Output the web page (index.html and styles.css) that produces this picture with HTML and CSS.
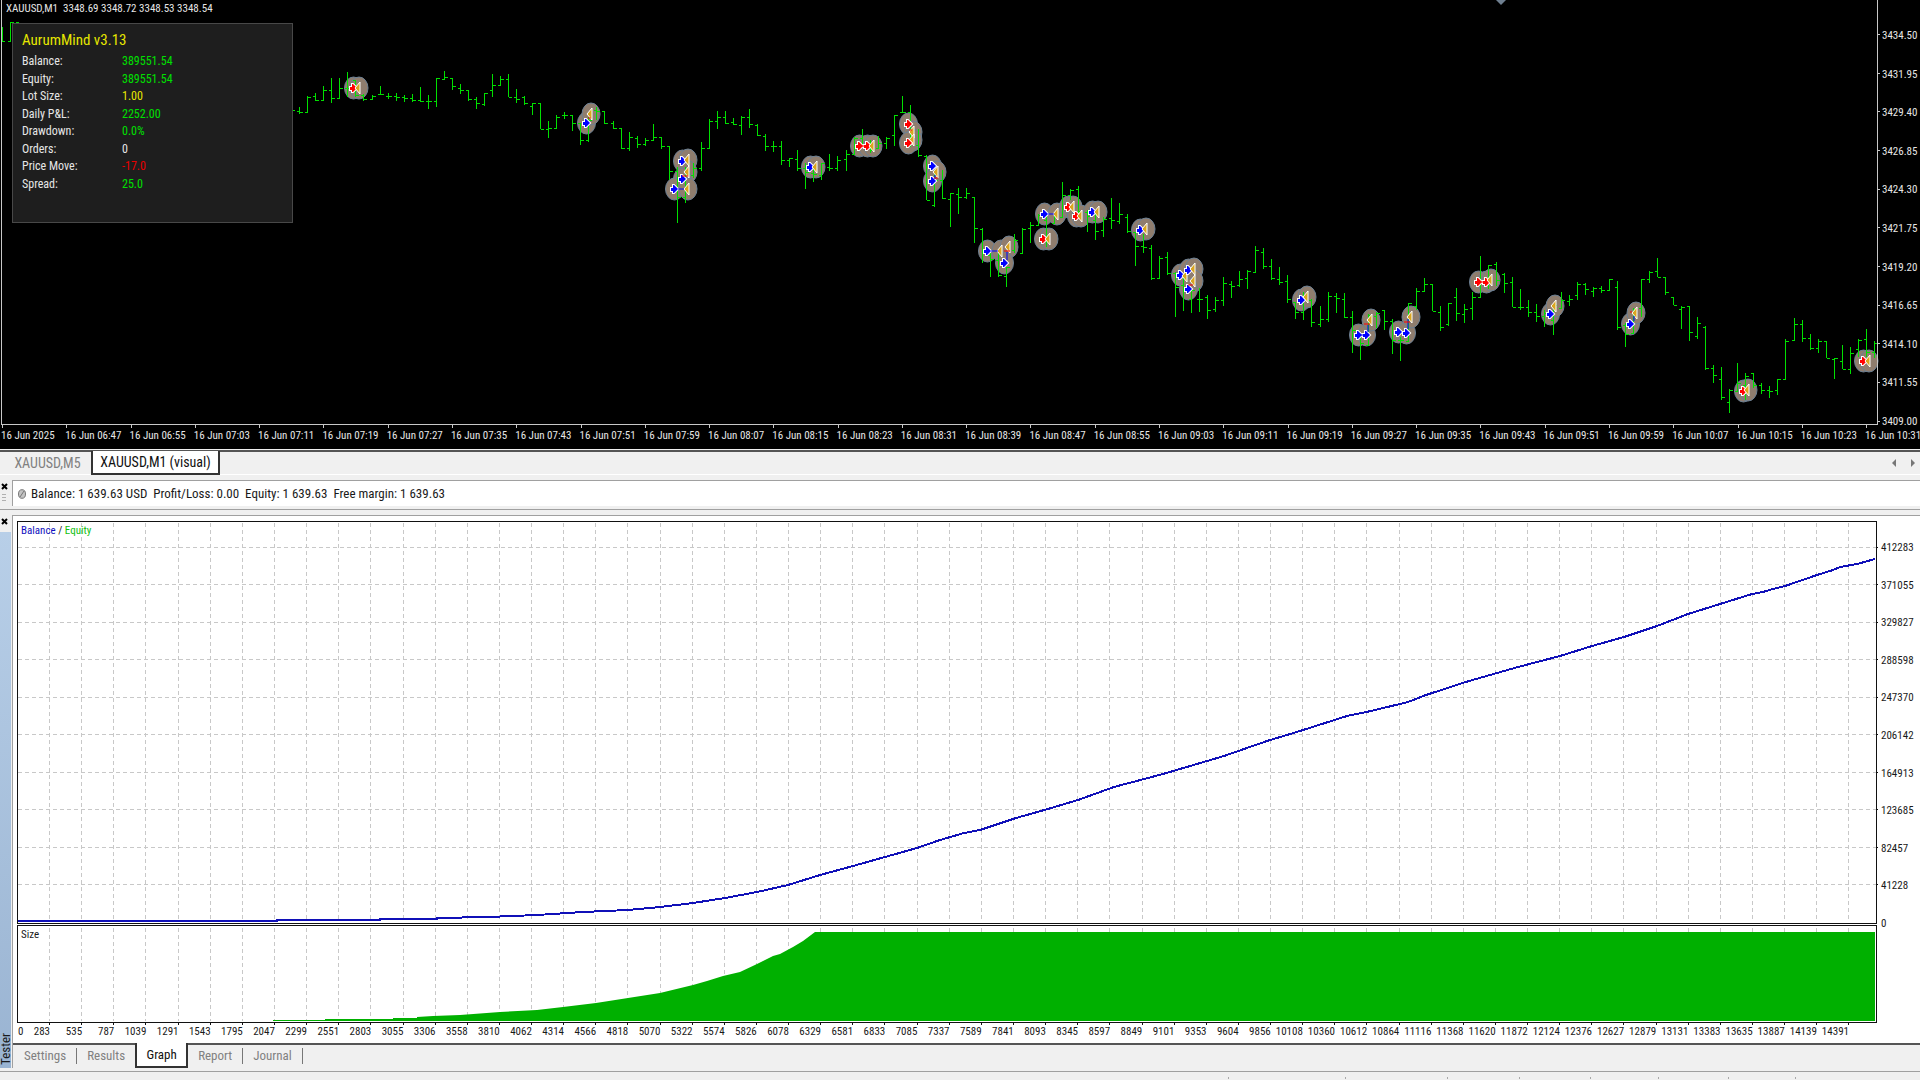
FILE: index.html
```html
<!DOCTYPE html>
<html lang="en">
<head>
<meta charset="utf-8">
<title>XAUUSD,M1 (visual)</title>
<link rel="stylesheet" href="styles.css">
</head>
<body>
<section class="price-chart">
  <div class="price-row">
    <svg id="price-plot" class="plot" viewBox="0 0 1880 428" role="img" aria-label="XAUUSD M1 price chart"></svg>
    <ol class="price-axis">
      <li>3434.50</li><li>3431.95</li><li>3429.40</li><li>3426.85</li><li>3424.30</li><li>3421.75</li><li>3419.20</li><li>3416.65</li><li>3414.10</li><li>3411.55</li><li>3409.00</li>
    </ol>
  </div>
  <ol id="time-axis" class="time-axis"></ol>
  <p class="quote">XAUUSD,M1&nbsp; 3348.69 3348.72 3348.53 3348.54</p>
  <svg class="shift-mark" viewBox="0 0 10 5"><path d="M0 0H10L5 5Z"/></svg>
  <aside class="ea-panel">
    <h1>AurumMind v3.13</h1>
    <dl>
      <dt>Balance:</dt><dd>389551.54</dd>
      <dt>Equity:</dt><dd>389551.54</dd>
      <dt>Lot Size:</dt><dd class="yellow">1.00</dd>
      <dt>Daily P&amp;L:</dt><dd>2252.00</dd>
      <dt>Drawdown:</dt><dd>0.0%</dd>
      <dt>Orders:</dt><dd class="white">0</dd>
      <dt>Price Move:</dt><dd class="red">-17.0</dd>
      <dt>Spread:</dt><dd>25.0</dd>
    </dl>
  </aside>
</section>

<nav class="chart-tabs">
  <button class="tab">XAUUSD,M5</button>
  <button class="tab active">XAUUSD,M1 (visual)</button>
  <span class="scrollers">
    <button aria-label="Scroll left"><svg viewBox="0 0 5 8"><path d="M4 0V8L0 4Z"/></svg></button>
    <button aria-label="Scroll right"><svg viewBox="0 0 5 8"><path d="M0 0V8L4 4Z"/></svg></button>
  </span>
</nav>

<section class="terminal">
  <div class="terminal-side">
    <button class="close" aria-label="Close terminal"><svg viewBox="0 0 7 7"><path d="M1 1L6 6M6 1L1 6"/></svg></button>
    <span class="grip"></span>
  </div>
  <p class="balance-line">
    <svg viewBox="0 0 8 10"><ellipse cx="4" cy="5" rx="3.5" ry="4.3"/><path d="M2 8L6 2"/></svg>
    <span>Balance: 1 639.63 USD&nbsp; Profit/Loss: 0.00&nbsp; Equity: 1 639.63&nbsp; Free margin: 1 639.63</span>
  </p>
</section>

<section class="tester">
  <div class="tester-side">
    <button class="close" aria-label="Close tester"><svg viewBox="0 0 7 7"><path d="M1 1L6 6M6 1L1 6"/></svg></button>
    <h2>Tester</h2>
  </div>
  <div class="tester-main">
    <div class="graph">
      <div class="graph-row">
        <div class="graph-plot">
          <svg id="balance-plot" class="plot" viewBox="16 520 1862 505" role="img" aria-label="Balance and size graph"></svg>
          <p class="legend"><span class="balance">Balance</span> / <span class="equity">Equity</span></p>
          <p class="size-label">Size</p>
        </div>
        <ol class="balance-axis">
          <li>412283</li><li>371055</li><li>329827</li><li>288598</li><li>247370</li><li>206142</li><li>164913</li><li>123685</li><li>82457</li><li>41228</li><li>0</li>
        </ol>
      </div>
      <ol id="trade-axis" class="trade-axis"></ol>
    </div>
    <nav class="tester-tabs">
      <button class="tab">Settings</button>
      <button class="tab">Results</button>
      <button class="tab active">Graph</button>
      <button class="tab">Report</button>
      <button class="tab">Journal</button>
    </nav>
  </div>
</section>

<footer class="status-bar"><span></span><span></span><span></span><span></span><span></span><span></span><span></span><span></span><span></span></footer>
<script src="app.js"></script>
</body>
</html>
```
FILE: styles.css
```css
* { box-sizing: border-box; }
body {
  margin: 0;
  background: #f0f0f0;
  color: #1a1a1a;
  font-family: "Roboto Condensed", Roboto, "Liberation Sans", sans-serif;
  font-size: 14px;
}
h1, h2, p, dl, dd, ol { margin: 0; padding: 0; font-weight: 400; }
ol { list-style: none; }
button { border: 0; margin: 0; padding: 0; background: none; font: inherit; color: inherit; }
svg { display: block; }
.plot { width: 100%; height: auto; }

/* Price chart */
.price-chart { position: relative; background: #000; color: #e6e6e6; font-size: 11px; line-height: 12px; }
.price-row { display: grid; grid-template-columns: minmax(0, 1fr) 40px; }
.price-axis { display: flex; flex-direction: column; justify-content: space-between; padding: 30px 0 0 2px; }
.time-axis { display: grid; grid-template-columns: repeat(29, minmax(0, 1fr)) 55px; height: 21px; padding: 2px 0 0 1px; white-space: nowrap; }
.quote { position: absolute; left: 6px; top: 3px; }
.shift-mark { position: absolute; left: 78%; top: 0; width: 10px; margin-left: -2px; fill: #6f7f90; }
.ea-panel {
  position: absolute; left: 12px; top: 23px; width: 281px; height: 200px;
  padding: 6px 9px; background: #1e1e1e; border: 1px solid #484848;
}
.ea-panel h1 { font-size: 15px; line-height: 20px; color: #e6e600; margin-bottom: 3px; }
.ea-panel dl {
  display: grid; grid-template-columns: 100px 1fr; align-content: space-between;
  height: 140px; font-size: 12px; line-height: 17px;
}
.ea-panel dd { color: #00e000; }
.ea-panel dd.yellow { color: #e6e600; }
.ea-panel dd.white { color: #e6e6e6; }
.ea-panel dd.red { color: #e60000; }

.bars { stroke: #00e000; stroke-width: 1; fill: none; shape-rendering: crispEdges; }
.halo { fill: #8f7d6e; stroke: #6c8094; }
.frame { stroke: #c8c8c8; stroke-width: 1; fill: none; shape-rendering: crispEdges; }
.buy { fill: #0000ff; stroke: #fff; paint-order: stroke; stroke-width: 2; }
.sell { fill: #ff0000; stroke: #fff; paint-order: stroke; stroke-width: 2; }
.exit { fill: #daa520; stroke: #fff; stroke-width: 1; }
.link-buy { stroke: #0000ff; fill: none; }
.link-sell { stroke: #ff0000; fill: none; }

/* Chart tabs */
.tab { padding: 0 10px; color: #808080; white-space: nowrap; }
.tab.active { background: #fff; color: #111; border: 2px solid #333; border-top: 0; }
.chart-tabs { display: flex; align-items: flex-start; border-top: 2px solid #555; margin-top: 1px; padding-left: 4px; height: 25px; border-bottom: 1px solid #fff; }
.chart-tabs .tab { line-height: 22px; }
.chart-tabs .tab:first-child { width: 87px; }
.chart-tabs .active { width: 129px; margin-top: -1px; padding: 0; }
.scrollers { display: flex; gap: 14px; margin: 7px 4px 0 auto; }
.scrollers svg { width: 5px; height: 8px; fill: #777; }

/* Terminal */
.terminal { display: grid; grid-template-columns: 12px 1fr; margin-top: 5px; padding-bottom: 3px; border-bottom: 1px solid #a0a0a0; }
.terminal-side { padding: 3px 0 0 1px; }
.close { display: block; }
.close svg { width: 7px; height: 7px; fill: none; stroke: #000; stroke-width: 2; }
.grip { display: block; width: 4px; height: 9px; margin: 4px 0 0 1px; background: repeating-linear-gradient(#b0b0b0 0 1px, #f0f0f0 1px 3px); }
.balance-line { display: flex; align-items: center; gap: 5px; height: 26px; padding-left: 5px; background: #fff; border: 1px solid #a0a0a0; border-width: 1px 0 0 1px; white-space: nowrap; font-size: 13px; }
.balance-line svg { width: 8px; height: 10px; fill: #c4c4c4; stroke: #777; }

/* Tester */
.tester { display: grid; grid-template-columns: 12px minmax(0, 1fr); margin-top: 5px; }
.tester-side { display: flex; flex-direction: column; }
.tester-side .close { padding: 3px 0 7px 1px; }
.tester-side h2 {
  flex: 1; width: 11px; padding-top: 3px; writing-mode: vertical-rl; transform: rotate(180deg);
  background: linear-gradient(#9ab4d2, #b8cfe8); font-size: 13px; line-height: 11px;
}
.tester-main { border: 1px solid #a0a0a0; border-width: 1px 0 0 1px; }
.graph { background: #fff; padding: 4px 0 5px 3px; font-size: 11px; line-height: 12px; }
.graph-row { display: grid; grid-template-columns: minmax(0, 1fr) 42px; }
.graph-plot { position: relative; }
.legend { position: absolute; left: 5px; top: 5px; }
.legend .balance { color: #1010c0; }
.legend .equity { color: #10c010; }
.size-label { position: absolute; left: 5px; top: 81%; }
.balance-axis { display: flex; flex-direction: column; justify-content: space-between; padding: 22px 0 95px 3px; }
.trade-axis { display: grid; grid-template-columns: 8px 24px repeat(56, minmax(0, 1fr)); padding: 1px 71px 0 2px; white-space: nowrap; }
.trade-axis li { display: flex; justify-content: flex-end; }
.trade-axis li:first-child { justify-content: flex-start; }
.tester-tabs { display: flex; align-items: flex-start; height: 25px; border-top: 2px solid #555; }
.tester-tabs .tab { font-size: 13px; }
.tester-tabs .tab:not(.active) { padding: 0 10px; border-right: 1px solid #777; line-height: 16px; margin-top: 3px; }
.tester-tabs .tab:first-child { padding-left: 11px; }
.tester-tabs .tab:nth-child(2) { border-right: 0; }
.tester-tabs .active { width: 53px; padding: 0; margin-top: -2px; line-height: 23px; }

.grid { stroke: #c8c8c8; stroke-dasharray: 4 3; fill: none; shape-rendering: crispEdges; }
.box { stroke: #111; fill: none; shape-rendering: crispEdges; }
.balance-curve { stroke: #1010b8; stroke-width: 2; fill: none; shape-rendering: crispEdges; }
.size-area { fill: #00b000; }

.status-bar { display: grid; grid-template-columns: 1228fr 117fr 102fr 72fr 71fr 68fr 70fr 67fr 125fr; height: 8px; margin-top: 3px; padding-top: 5px; border-top: 1px solid #a0a0a0; }
.status-bar span + span { border-left: 1px solid #a8a8a8; }
```
FILE: app.js
```javascript
const price = document.getElementById('price-plot');
const graph = document.getElementById('balance-plot');
const BAR_STEP = 8.034;
const BAR_START = 299.7;

// Visible bars: high, low, open, close
const bars = [
[107,114,111,112],[96,113,112,97],[93,101,96,100],[86,101,100,90],[78,103,90,98],[78,98,98,88],[72,97,88,88],[80,97,80,95],[94,101,95,99],[95,100,99,96],
[86,95,94,94],[93,99,96,96],[93,101,96,97],[95,102,97,98],[94,102,98,100],[87,102,100,101],[95,109,101,101],[78,107,101,78],[71,79,79,77],[78,90,78,86],
[84,94,88,90],[90,101,90,99],[97,109,99,103],[93,106,104,93],[74,97,90,85],[76,85,85,79],[74,97,79,97],[89,103,97,99],[96,105,97,103],[103,115,106,103],
[103,129,103,129],[121,138,129,128],[115,128,128,117],[112,119,115,115],[115,131,115,123],[123,145,123,140],[117,142,140,120],[107,120,110,111],[111,124,111,123],[121,129,123,128],
[128,149,128,148],[132,151,148,137],[136,148,138,144],[138,146,144,140],[124,141,140,137],[137,149,137,146],[146,180,146,171],[167,223,171,197],[167,203,197,175],[163,178,175,168],
[142,171,168,148],[119,148,148,121],[111,129,121,117],[111,124,117,123],[118,125,122,124],[116,135,125,117],[109,128,117,124],[124,136,125,135],[134,151,136,146],[141,152,146,146],
[141,165,146,160],[158,167,160,158],[150,171,159,168],[163,189,168,172],[168,182,173,174],[163,180,175,163],[154,171,167,168],[156,171,168,160],[150,171,159,154],[137,155,154,138],
[129,147,138,145],[140,153,145,150],[136,149,148,143],[137,149,143,138],[115,146,135,115],[96,113,112,112],[105,147,112,140],[129,157,145,155],[155,200,156,200],[170,207,205,180],
[170,199,180,198],[193,227,199,193],[188,214,194,197],[188,199,197,193],[197,243,197,228],[228,263,229,250],[253,277,255,259],[253,277,260,275],[267,287,276,267],[234,253,250,240],
[228,253,253,229],[222,243,228,225],[214,225,225,215],[215,247,220,236],[212,224,223,216],[182,217,217,195],[189,200,195,190],[186,213,189,211],[210,232,212,216],[213,240,220,231],
[217,237,230,219],[198,229,218,220],[203,224,221,214],[214,233,217,231],[232,266,232,246],[234,253,246,247],[245,280,248,278],[256,279,278,258],[252,275,257,273],[272,317,273,287],
[278,311,285,290],[290,313,299,290],[288,312,299,299],[295,319,297,310],[297,312,309,300],[277,306,300,283],[281,298,284,286],[271,287,285,279],[270,289,278,271],[246,273,272,250],
[248,269,252,266],[259,280,266,278],[267,285,279,282],[275,303,281,299],[302,319,302,312],[292,320,312,296],[299,327,300,322],[306,327,324,319],[292,322,319,296],[293,313,296,298],
[293,318,299,317],[311,353,317,330],[337,360,338,343],[314,345,345,315],[312,328,316,313],[310,330,310,321],[319,354,321,340],[337,361,340,340],[303,341,341,303],[288,310,306,291],
[278,292,291,284],[284,311,284,311],[306,331,312,327],[303,326,324,303],[288,321,297,313],[304,323,314,309],[292,320,308,297],[256,297,297,280],[265,289,280,265],[262,286,264,280],
[273,293,274,283],[277,307,282,307],[289,310,307,307],[300,317,307,312],[304,322,312,316],[310,327,316,313],[304,335,320,305],[292,309,308,300],[295,306,301,299],[282,300,295,284],
[283,295,284,289],[287,297,291,288],[286,293,288,290],[279,291,290,279],[281,330,287,327],[323,347,325,334],[308,334,333,309],[279,317,308,279],[271,283,279,272],[258,277,271,277],
[277,295,277,292],[297,305,297,305],[306,329,309,307],[306,341,306,332],[317,339,336,323],[326,370,327,368],[365,383,368,375],[367,400,379,397],[389,413,402,390],[363,392,391,383],
[373,400,385,376],[373,388,373,385],[383,394,385,390],[386,398,390,391],[379,395,390,379],[339,379,379,341],[318,340,340,324],[320,342,324,338],[334,350,338,348],[339,353,348,341],
[341,358,341,358],[358,379,359,358],[345,369,361,369],[347,374,369,353],[339,357,349,340],[329,357,339,352],[341,358,352,343]
];

// Orders (b = buy, s = sell) and exits (x)
const marks = [
['s',353,88],['x',358,88],['b',586,123],['x',590,114],['b',682,161],['x',687,160],['x',687,172],['b',682,179],['b',674,189],['x',687,189],
['b',810,167],['x',815,167],['s',859,146],['s',867,146],['x',872,146],['s',908,124],['x',912,132],['x',912,140],['s',908,143],
['b',932,166],['x',936,172],['b',932,181],['b',987,251],['x',1000,251],['x',1008,247],['b',1004,263],['b',1044,214],['x',1056,214],
['s',1068,207],['x',1072,207],['s',1076,216],['x',1080,216],['s',1043,239],['x',1048,239],['b',1092,212],['x',1097,212],['b',1140,230],['x',1145,229],
['b',1180,275],['x',1185,276],['b',1188,270],['x',1193,269],['x',1193,281],['b',1188,289],['b',1301,300],['x',1306,297],
['b',1358,335],['b',1366,335],['x',1370,320],['b',1398,332],['b',1406,333],['x',1410,317],['s',1478,282],['s',1486,282],['x',1490,280],
['b',1550,314],['x',1554,306],['b',1630,324],['x',1635,313],['s',1743,391],['x',1747,390],['s',1863,361],['x',1868,361]
];

function barPath() {
  let d = 'M2.5 27V42M2 41.5H5M10.5 22V42M8 41.5H11M11 22.5H14M18.5 22V24M16 22.5H19M293 110.5H295';
  bars.forEach(([high, low, open, close], i) => {
    const x = Math.floor(BAR_START + i * BAR_STEP) + 0.5;
    d += `M${x} ${high}V${low}M${x - 3} ${open + 0.5}H${x}M${x} ${close + 0.5}H${Math.min(x + 3, 1877)}`;
  });
  return d;
}

let halos = '', arrows = '';
for (const [kind, x, y] of marks) {
  const cx = kind === 'x' ? x + 1 : x + 0.5;
  halos += `<ellipse class="halo" cx="${cx}" cy="${y}" rx="9" ry="11"/>`;
  arrows += kind === 'x'
    ? `<path class="exit" d="M${x + 2} ${y - 6}V${y + 6}L${x - 3} ${y}Z"/>`
    : `<path class="${kind === 'b' ? 'buy' : 'sell'}" d="M${x - 3} ${y - 1}H${x - 1}V${y - 4}H${x}L${x + 4} ${y}L${x} ${y + 4}H${x - 1}V${y + 2}H${x - 3}Z"/>`;
}
let ticks = '';
for (let k = 0; k < 30; k++) ticks += `M${Math.round(2 + k * 64.28) + 0.5} 425V428`;
for (let k = 0; k < 11; k++) ticks += `M1878 ${Math.round(34 + k * 38.67) + 0.5}H1880`;

price.innerHTML = halos
  + `<path class="bars" d="${barPath()}"/>` + arrows
  + '<path class="link-buy" d="M678 189H684M991 251H998M1048 214H1054M1007 252V260M1368 325V332M1408 319V329M1361 335H1364M1634 316V321M935 175V179"/>'
  + '<path class="link-sell" d="M862 146H865M588 118H591M682 176H688M909 130H912M934 178H938M1004 251H1010M1188 285H1193M1364 324H1370M1404 322H1410M1480 282H1484M1630 312H1632"/>'
  + `<path class="frame" d="M1.5 0V425M1877.5 0V425M1 424.5H1878${ticks}"/>`;

const times = ['2025'];
for (let m = 6 * 60 + 47; m <= 10 * 60 + 31; m += 8) {
  times.push(String(Math.floor(m / 60)).padStart(2, '0') + ':' + String(m % 60).padStart(2, '0'));
}
document.getElementById('time-axis').innerHTML = times.map(t => `<li>16 Jun ${t}</li>`).join('');

// Balance curve and lot size area
const curve = [[18,921],[277,921],[277,920],[380,920],[380,919],[437,919],[437,918],[488,917],[537,915],[583,912],[628,910],[660,907],[693,903],[725,898],[757,892],[788,885],[820,875],[853,866],[885,857],[917,848],[940,840],[964,833],[980,830],[1016,818],[1048,809],[1078,800],[1114,787],[1163,774],[1224,756],[1267,741],[1300,731],[1347,716],[1371,711],[1408,702],[1426,695],[1469,681],[1518,667],[1560,656],[1592,646],[1624,637],[1657,626],[1688,614],[1720,604],[1752,594],[1763,592],[1773,589],[1785,586],[1817,575],[1833,570],[1840,567],[1857,564],[1875,559]];
const sizes = [[273,1020],[325,1020],[325,1019],[393,1019],[393,1018],[417,1018],[417,1017],[433,1016],[460,1015],[500,1012],[537,1010],[563,1007],[596,1003],[628,998],[660,993],[693,985],[707,981],[723,976],[740,972],[757,964],[773,956],[780,954],[793,947],[803,941],[815,932],[1875,932]];

let lines = '', marksX = '';
for (let k = 0; k < 57; k++) {
  const x = Math.floor(49.6 + k * 32.13) + 0.5;
  lines += `M${x} 523V922M${x} 928V1021`;
  marksX += `M${x} 1023V1025`;
}
for (let k = 0; k < 10; k++) {
  const y = Math.floor(547 + k * 37.55) + 0.5;
  lines += `M18 ${y}H1876`;
  marksX += `M1876 ${y}H1878`;
}
graph.innerHTML = `<path class="grid" d="${lines}"/>`
  + `<path class="size-area" d="M273 1021L${sizes.map(p => p.join(' ')).join('L')}V1021Z"/>`
  + `<path class="balance-curve" d="M${curve.map(p => p.join(' ')).join('L')}"/>`
  + `<path class="box" d="M17.5 521.5H1876.5V923.5H17.5ZM17.5 925.5H1876.5V1022.5H17.5Z${marksX}"/>`;

const trades = [0];
for (let k = 0; k < 57; k++) {
  trades.push(283 + 252 * k - [12, 24, 37, 49].filter(n => k >= n).length);
}
document.getElementById('trade-axis').innerHTML = trades.map(t => `<li>${t}</li>`).join('');
```
